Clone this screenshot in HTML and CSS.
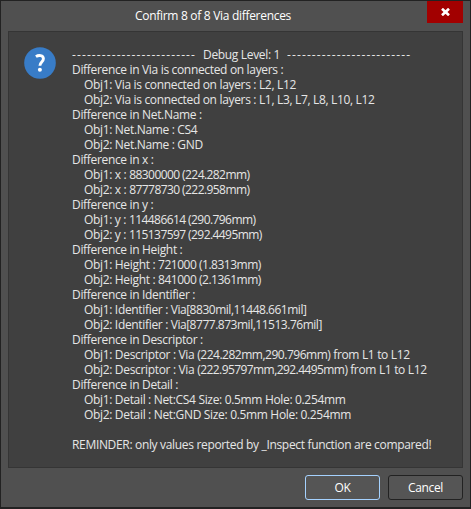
FILE: index.html
```
<!DOCTYPE html>
<html lang="en">
<head>
<meta charset="utf-8">
<title>Confirm 8 of 8 Via differences</title>
<link rel="stylesheet" href="styles.css">
</head>
<body>
<div class="dialog">
  <header class="titlebar">
    <h1 class="title">Confirm 8 of 8 Via differences</h1>
    <button class="close" aria-label="Close">
      <svg width="9" height="8" viewBox="0 0 9 8"><path d="M1 0.7 8 7.3M8 0.7 1 7.3" stroke="#fff" stroke-width="2.6"/></svg>
    </button>
  </header>
  <main class="panel">
    <svg class="icon" width="32" height="32" viewBox="0 0 32 32">
      <circle cx="16" cy="16" r="15.8" fill="#387cc7"/>
      <path d="M11.9 9.6C14.6 7.8 19.4 7.9 19.4 11.8C19.4 15 15.9 15.1 15.9 18.8" fill="none" stroke="#fff" stroke-width="2.9"/>
      <circle cx="15.9" cy="22.7" r="2" fill="#fff"/>
    </svg>
    <div class="message">
      <p class="rule"><span class="dashes">-------------------------</span><span class="level">Debug Level: 1</span><span class="dashes">-------------------------</span></p>
      <p>Difference in Via is connected on layers :</p>
      <p class="sub">Obj1: Via is connected on layers : L2, L12</p>
      <p class="sub">Obj2: Via is connected on layers : L1, L3, L7, L8, L10, L12</p>
      <p>Difference in Net.Name :</p>
      <p class="sub">Obj1: Net.Name : CS4</p>
      <p class="sub">Obj2: Net.Name : GND</p>
      <p>Difference in x :</p>
      <p class="sub">Obj1: x : <span class="num">88300000 (224.282mm)</span></p>
      <p class="sub">Obj2: x : <span class="num">87778730 (222.958mm)</span></p>
      <p>Difference in y :</p>
      <p class="sub">Obj1: y : <span class="num">114486614 (290.796mm)</span></p>
      <p class="sub">Obj2: y : <span class="num">115137597 (292.4495mm)</span></p>
      <p>Difference in Height :</p>
      <p class="sub">Obj1: Height : <span class="tight">721000 (1.8313mm)</span></p>
      <p class="sub">Obj2: Height : <span class="tight">841000 (2.1361mm)</span></p>
      <p>Difference in Identifier :</p>
      <p class="sub">Obj1: Identifier : <span class="tight">Via[8830mil,11448.661mil]</span></p>
      <p class="sub">Obj2: Identifier : <span class="tight">Via[8777.873mil,11513.76mil]</span></p>
      <p>Difference in Descriptor :</p>
      <p class="sub">Obj1: Descriptor : Via <span class="tight">(224.282mm,290.796mm)</span> from L1 to L12</p>
      <p class="sub">Obj2: Descriptor : Via <span class="num">(222.95797mm,292.4495mm)</span> from L1 to L12</p>
      <p>Difference in Detail :</p>
      <p class="sub">Obj1: Detail : Net:CS4 Size: 0.5mm Hole: 0.254mm</p>
      <p class="sub">Obj2: Detail : Net:GND Size: 0.5mm Hole: 0.254mm</p>
      <p class="reminder">REMINDER: only values reported by _Inspect function are compared!</p>
    </div>
  </main>
  <footer class="actions">
    <button class="btn primary">OK</button>
    <button class="btn">Cancel</button>
  </footer>
</div>
</body>
</html>
```
FILE: styles.css
```
* { box-sizing: border-box; }
body {
  margin: 0;
  font-family: "Open Sans", "Noto Sans", sans-serif;
  font-size: 12px;
  letter-spacing: -0.33px;
  color: #e6e6e6;
}
.dialog {
  width: 471px;
  height: 509px;
  display: flex;
  flex-direction: column;
  background: #505050;
  border: 1px solid #222;
  border-bottom-width: 2px;
}
.titlebar {
  height: 30px;
  flex: none;
  display: flex;
  align-items: flex-start;
  justify-content: space-between;
  padding-right: 7px;
}
.title {
  margin: 0 0 0 134px;
  font-size: 12px;
  font-weight: 400;
  line-height: 30px;
  letter-spacing: -0.3px;
  color: #fff;
}
.close {
  width: 36px;
  height: 22px;
  border: 0;
  padding: 0;
  background: #a20000;
  display: flex;
  align-items: center;
  justify-content: center;
}
.panel {
  height: 437px;
  flex: none;
  margin: 0 7px;
  padding: 15px;
  display: flex;
  gap: 16px;
  align-items: flex-start;
  background: #404040;
  border: 1px solid #353535;
}
.icon { flex: none; }
.message { white-space: nowrap; line-height: 15px; }
.message p { margin: 0; height: 15px; }
.message .sub { padding-left: 12px; }
.message .reminder { margin-top: 15px; }
.num { letter-spacing: -0.57px; }
.tight { letter-spacing: -0.48px; }
.rule { display: flex; gap: 7px; }
.dashes { width: 124px; letter-spacing: 1.1px; overflow: hidden; }
.actions {
  display: flex;
  justify-content: flex-end;
  gap: 8px;
  padding: 7px 7px 0;
}
.btn {
  width: 75px;
  height: 25px;
  padding: 0;
  font: inherit;
  letter-spacing: inherit;
  color: #fff;
  background: #555;
  border: 1px solid #222;
  border-radius: 3px;
}
.primary { border-color: #a5d2ff; }
```
